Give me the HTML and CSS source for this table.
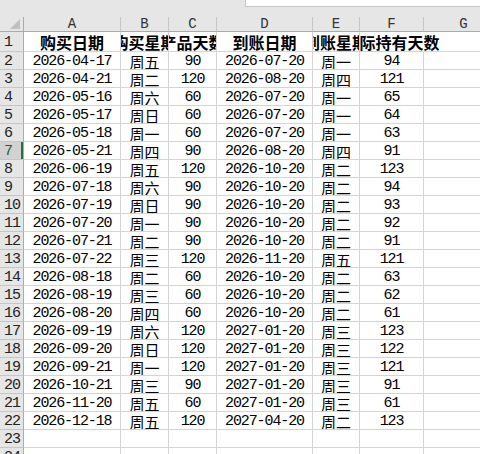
FILE: index.html
```html
<!DOCTYPE html>
<html lang="zh">
<head>
<meta charset="utf-8">
<title>Sheet</title>
<link rel="stylesheet" href="styles.css">
</head>
<body>
<div class="top"><div class="fx"></div></div>
<div class="sheet">
  <div class="corner"><span class="tri"></span></div>
  <div class="ch">A</div><div class="ch">B</div><div class="ch">C</div><div class="ch">D</div><div class="ch">E</div><div class="ch">F</div><div class="ch">G</div>

  <div class="rh">1</div><div class="c hd">购买日期</div><div class="c hd">购买星期</div><div class="c hd">产品天数</div><div class="c hd">到账日期</div><div class="c hd">到账星期</div><div class="c hd spill">实际持有天数</div><div class="c blank"></div>

  <div class="rh">2</div><div class="c n">2026-04-17</div><div class="c w">周五</div><div class="c n">90</div><div class="c n">2026-07-20</div><div class="c w">周一</div><div class="c n">94</div><div class="c"></div>
  <div class="rh">3</div><div class="c n">2026-04-21</div><div class="c w">周二</div><div class="c n">120</div><div class="c n">2026-08-20</div><div class="c w">周四</div><div class="c n">121</div><div class="c"></div>
  <div class="rh">4</div><div class="c n">2026-05-16</div><div class="c w">周六</div><div class="c n">60</div><div class="c n">2026-07-20</div><div class="c w">周一</div><div class="c n">65</div><div class="c"></div>
  <div class="rh">5</div><div class="c n">2026-05-17</div><div class="c w">周日</div><div class="c n">60</div><div class="c n">2026-07-20</div><div class="c w">周一</div><div class="c n">64</div><div class="c"></div>
  <div class="rh">6</div><div class="c n">2026-05-18</div><div class="c w">周一</div><div class="c n">60</div><div class="c n">2026-07-20</div><div class="c w">周一</div><div class="c n">63</div><div class="c"></div>
  <div class="rh sel">7</div><div class="c n">2026-05-21</div><div class="c w">周四</div><div class="c n">90</div><div class="c n">2026-08-20</div><div class="c w">周四</div><div class="c n">91</div><div class="c"></div>
  <div class="rh">8</div><div class="c n">2026-06-19</div><div class="c w">周五</div><div class="c n">120</div><div class="c n">2026-10-20</div><div class="c w">周二</div><div class="c n">123</div><div class="c"></div>
  <div class="rh">9</div><div class="c n">2026-07-18</div><div class="c w">周六</div><div class="c n">90</div><div class="c n">2026-10-20</div><div class="c w">周二</div><div class="c n">94</div><div class="c"></div>
  <div class="rh">10</div><div class="c n">2026-07-19</div><div class="c w">周日</div><div class="c n">90</div><div class="c n">2026-10-20</div><div class="c w">周二</div><div class="c n">93</div><div class="c"></div>
  <div class="rh">11</div><div class="c n">2026-07-20</div><div class="c w">周一</div><div class="c n">90</div><div class="c n">2026-10-20</div><div class="c w">周二</div><div class="c n">92</div><div class="c"></div>
  <div class="rh">12</div><div class="c n">2026-07-21</div><div class="c w">周二</div><div class="c n">90</div><div class="c n">2026-10-20</div><div class="c w">周二</div><div class="c n">91</div><div class="c"></div>
  <div class="rh">13</div><div class="c n">2026-07-22</div><div class="c w">周三</div><div class="c n">120</div><div class="c n">2026-11-20</div><div class="c w">周五</div><div class="c n">121</div><div class="c"></div>
  <div class="rh">14</div><div class="c n">2026-08-18</div><div class="c w">周二</div><div class="c n">60</div><div class="c n">2026-10-20</div><div class="c w">周二</div><div class="c n">63</div><div class="c"></div>
  <div class="rh">15</div><div class="c n">2026-08-19</div><div class="c w">周三</div><div class="c n">60</div><div class="c n">2026-10-20</div><div class="c w">周二</div><div class="c n">62</div><div class="c"></div>
  <div class="rh">16</div><div class="c n">2026-08-20</div><div class="c w">周四</div><div class="c n">60</div><div class="c n">2026-10-20</div><div class="c w">周二</div><div class="c n">61</div><div class="c"></div>
  <div class="rh">17</div><div class="c n">2026-09-19</div><div class="c w">周六</div><div class="c n">120</div><div class="c n">2027-01-20</div><div class="c w">周三</div><div class="c n">123</div><div class="c"></div>
  <div class="rh">18</div><div class="c n">2026-09-20</div><div class="c w">周日</div><div class="c n">120</div><div class="c n">2027-01-20</div><div class="c w">周三</div><div class="c n">122</div><div class="c"></div>
  <div class="rh">19</div><div class="c n">2026-09-21</div><div class="c w">周一</div><div class="c n">120</div><div class="c n">2027-01-20</div><div class="c w">周三</div><div class="c n">121</div><div class="c"></div>
  <div class="rh">20</div><div class="c n">2026-10-21</div><div class="c w">周三</div><div class="c n">90</div><div class="c n">2027-01-20</div><div class="c w">周三</div><div class="c n">91</div><div class="c"></div>
  <div class="rh">21</div><div class="c n">2026-11-20</div><div class="c w">周五</div><div class="c n">60</div><div class="c n">2027-01-20</div><div class="c w">周三</div><div class="c n">61</div><div class="c"></div>
  <div class="rh">22</div><div class="c n">2026-12-18</div><div class="c w">周五</div><div class="c n">120</div><div class="c n">2027-04-20</div><div class="c w">周二</div><div class="c n">123</div><div class="c"></div>
  <div class="rh">23</div><div class="c"></div><div class="c"></div><div class="c"></div><div class="c"></div><div class="c"></div><div class="c"></div><div class="c"></div>
  <div class="rh">24</div><div class="c"></div><div class="c"></div><div class="c"></div><div class="c"></div><div class="c"></div><div class="c"></div><div class="c"></div>
</div>
</body>
</html>
```

FILE: styles.css
```css
html, body {
  margin: 0;
  padding: 0;
}
body {
  width: 480px;
  height: 454px;
  overflow: hidden;
  background: #ffffff;
  color: #000;
}
.top {
  height: 17px;
  background: #e6e6e6;
  display: flex;
  padding-left: 245px;
  box-sizing: border-box;
}
.fx {
  flex: 1;
  height: 6px;
  background: #fff;
  border-left: 1px solid #c6c6c6;
  border-bottom: 1px solid #c6c6c6;
}
.sheet {
  display: grid;
  grid-template-columns: 24px 97px 48px 48px 96px 47px 64px 80px;
  grid-template-rows: 15px 20px repeat(23, 18px);
  width: 504px;
}
.sheet > div {
  box-sizing: border-box;
  border-right: 1px solid #d4d4d4;
  border-bottom: 1px solid #d4d4d4;
  display: flex;
  justify-content: center;
  align-items: center;
  overflow: hidden;
  white-space: nowrap;
}
.corner {
  background: #e6e6e6;
  position: relative;
  border-right-color: #ababab !important;
  border-bottom-color: #ababab !important;
}
.tri {
  position: absolute;
  right: 3px;
  bottom: 2px;
  width: 0;
  height: 0;
  border-left: 10px solid transparent;
  border-bottom: 10px solid #c0c0c0;
}
.ch {
  background: #e6e6e6;
  border-right-color: #c6c6c6 !important;
  border-bottom-color: #ababab !important;
  font-family: "Liberation Mono", monospace;
  font-size: 14px;
  color: #333;
  line-height: 14px;
}
.rh {
  background: #e6e6e6;
  border-right-color: #ababab !important;
  border-bottom-color: #c6c6c6 !important;
  font-family: "Liberation Mono", monospace;
  font-size: 15px;
  letter-spacing: -1px;
  color: #222;
  justify-content: flex-start !important;
  padding-left: 4px;
  padding-top: 1px;
}
.rh.sel {
  background: #d2d2d2;
  box-shadow: inset -2px 0 0 #217346;
  color: #1f5f3a;
}
.c {
  background: #fff;
  line-height: 17px;
}
.n {
  font-family: "Liberation Mono", monospace;
  font-size: 15px;
  letter-spacing: -1.1px;
  padding-top: 1px;
}
.w {
  font-family: "Noto Sans CJK SC", sans-serif;
  font-size: 15px;
  padding-top: 1px;
}
.hd {
  font-family: "Noto Sans CJK SC", sans-serif;
  font-size: 16px;
  font-weight: 700;
  align-items: flex-end !important;
  line-height: 18px;
}
.sheet > .spill {
  overflow: visible;
  clip-path: inset(0 -60px 0 0);
  border-right-color: transparent;
  position: relative;
  z-index: 1;
  background: transparent;
}
.blank {
  background: transparent;
}
```
